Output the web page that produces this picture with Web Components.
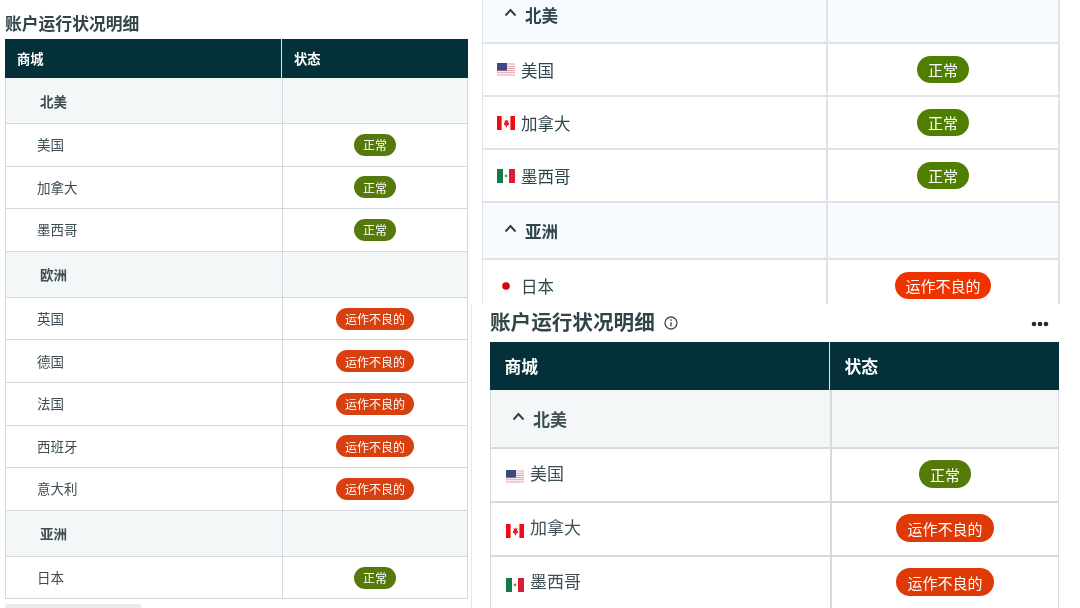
<!DOCTYPE html>
<html lang="zh">
<head>
<meta charset="utf-8">
<title>账户运行状况明细</title>
<style>
  html, body {
    margin: 0;
    height: 608px;
    overflow: hidden;
    background: #fff;
  }
  body {
    position: relative;
    font-family: "Noto Sans CJK SC", "Noto Sans", sans-serif;
  }
</style>
</head>
<body>

<!-- left screenshot -->
<health-panel style="left:0;top:0;width:470px;height:608px;--pad-left:5px;--pad-right:2px;--title-h:32px;--title-top:7px;--title-fs:16.8px;--col1:276px;--head-h:39px;--head-fs:13.3px;--head-px:12px;--group-h:46px;--group-fs:13.5px;--group-px:34px;--row-h:42.6px;--fs:13.5px;--row-px:31px;--name-lift:1px;--pill-h:22px;--pill-fs:12px;--pill-px:9px;--green:#55790b;--red:#d9400f;--group-bg:#f3f7f8;--ink:#3d4d53;--line:#d3d9dd">
  <span slot="title">账户运行状况明细</span>
  <health-table>
    <span slot="market">商城</span>
    <span slot="status">状态</span>
    <region-row>北美</region-row>
    <market-row>美国<status-pill slot="status" kind="ok">正常</status-pill></market-row>
    <market-row>加拿大<status-pill slot="status" kind="ok">正常</status-pill></market-row>
    <market-row>墨西哥<status-pill slot="status" kind="ok">正常</status-pill></market-row>
    <region-row>欧洲</region-row>
    <market-row>英国<status-pill slot="status" kind="bad">运作不良的</status-pill></market-row>
    <market-row>德国<status-pill slot="status" kind="bad">运作不良的</status-pill></market-row>
    <market-row>法国<status-pill slot="status" kind="bad">运作不良的</status-pill></market-row>
    <market-row>西班牙<status-pill slot="status" kind="bad">运作不良的</status-pill></market-row>
    <market-row>意大利<status-pill slot="status" kind="bad">运作不良的</status-pill></market-row>
    <region-row>亚洲</region-row>
    <market-row>日本<status-pill slot="status" kind="ok">正常</status-pill></market-row>
  </health-table>
  <scroll-thumb></scroll-thumb>
</health-panel>

<!-- top right screenshot, scrolled so the header is out of view -->
<health-panel style="left:470px;top:0;width:610px;height:304px;--pad-left:12px;--pad-right:20px;--title-h:0px;--table-top:-13px;--col1:343px;--group-h:57px;--group-fs:16.5px;--group-px:21px;--row-h:53px;--fs:16.5px;--row-px:14px;--pill-h:27px;--pill-fs:15px;--pill-px:10.5px;--green:#4f7f00;--red:#ee3300;--group-bg:#f7faff;--ink:#2f454c;--line:#dfe3e8;--line-w:2px;--side-w:2px">
  <health-table nohead>
    <region-row><chevron-icon></chevron-icon>北美</region-row>
    <market-row><flag-icon kind="us"></flag-icon>美国<status-pill slot="status" kind="ok">正常</status-pill></market-row>
    <market-row><flag-icon kind="ca"></flag-icon>加拿大<status-pill slot="status" kind="ok">正常</status-pill></market-row>
    <market-row><flag-icon kind="mx"></flag-icon>墨西哥<status-pill slot="status" kind="ok">正常</status-pill></market-row>
    <region-row><chevron-icon></chevron-icon>亚洲</region-row>
    <market-row><flag-icon kind="jp"></flag-icon>日本<status-pill slot="status" kind="bad">运作不良的</status-pill></market-row>
  </health-table>
</health-panel>

<!-- bottom right screenshot -->
<health-panel edge style="left:471px;top:304px;width:609px;height:304px;--pad-left:19px;--pad-right:21px;--title-h:34px;--title-top:0px;--title-gap:4px;--title-fs:20.6px;--col1:339px;--head-h:48px;--head-fs:16.8px;--head-px:14.5px;--group-h:59px;--group-fs:17px;--group-px:21px;--row-h:54px;--fs:17px;--row-px:15px;--name-lift:5px;--flag-drop:8px;--pill-lift:2px;--pill-h:28px;--pill-fs:15px;--pill-px:11px;--green:#567a0a;--red:#dd3a08;--group-bg:#f4f7f8;--ink:#3c4f55;--line:#d5dadd;--line-w:2px">
  <span slot="title">账户运行状况明细</span>
  <info-icon slot="title-icon"></info-icon>
  <more-dots slot="actions"></more-dots>
  <health-table>
    <span slot="market">商城</span>
    <span slot="status">状态</span>
    <region-row><chevron-icon></chevron-icon>北美</region-row>
    <market-row><flag-icon kind="us"></flag-icon>美国<status-pill slot="status" kind="ok">正常</status-pill></market-row>
    <market-row><flag-icon kind="ca"></flag-icon>加拿大<status-pill slot="status" kind="bad">运作不良的</status-pill></market-row>
    <market-row><flag-icon kind="mx"></flag-icon>墨西哥<status-pill slot="status" kind="bad">运作不良的</status-pill></market-row>
  </health-table>
</health-panel>

<script>
// small helper so every element below is set up the same way
function shadow(el, html) {
  el.attachShadow({ mode: 'open' }).innerHTML = html;
}

class HealthPanel extends HTMLElement {
  constructor() {
    super();
    shadow(this, `
      <style>
        :host {
          position: absolute;
          display: flex;
          flex-direction: column;
          box-sizing: border-box;
          padding: 0 var(--pad-right) 0 var(--pad-left);
          background: #fff;
          overflow: hidden;
          filter: blur(.35px);
        }
        :host([edge]) {
          border-left: 1px solid #e4e8ea;
          padding-left: calc(var(--pad-left) - 1px);
        }
        header {
          flex: none;
          display: flex;
          align-items: center;
          gap: 9px;
          height: var(--title-h);
          padding-top: var(--title-top, 0);
          padding-bottom: var(--title-gap, 0);
          color: #334449;
          font-size: var(--title-fs, 16px);
          font-weight: 700;
          white-space: nowrap;
        }
        .actions { margin-left: auto; padding-right: 10px; display: flex; }
      </style>
      <header>
        <slot name="title"></slot>
        <slot name="title-icon"></slot>
        <div class="actions"><slot name="actions"></slot></div>
      </header>
      <slot></slot>
    `);
  }
}

class HealthTable extends HTMLElement {
  constructor() {
    super();
    shadow(this, `
      <style>
        :host {
          display: block;
          flex: none;
          margin-top: var(--table-top, 0);
        }
        .head {
          display: grid;
          grid-template-columns: var(--col1) 1fr;
          height: var(--head-h);
          background: #04303a;
          color: #fff;
          font-size: var(--head-fs);
          font-weight: 700;
        }
        .head div {
          display: flex;
          align-items: center;
          padding-left: var(--head-px);
        }
        .head div + div { border-left: 1px solid #dfe6e8; }
        :host([nohead]) .head { display: none; }
      </style>
      <div class="head">
        <div><slot name="market"></slot></div>
        <div><slot name="status"></slot></div>
      </div>
      <slot></slot>
    `);
  }
}

// both row types share this box: two columns, ruled lines, fixed height
const rowCss = `
  :host {
    display: grid;
    grid-template-columns: var(--col1) 1fr;
    box-sizing: border-box;
    border: solid var(--line);
    border-width: 0 var(--side-w, 1px) var(--line-w, 1px) 1px;
    color: var(--ink);
  }
  .status {
    display: flex;
    align-items: center;
    justify-content: center;
    border-left: var(--line-w, 1px) solid var(--line);
  }
  .name {
    display: flex;
    align-items: center;
    white-space: nowrap;
  }
`;

class RegionRow extends HTMLElement {
  constructor() {
    super();
    shadow(this, `
      <style>
        ${rowCss}
        :host {
          height: var(--group-h);
          background: var(--group-bg);
          font-size: var(--group-fs);
          font-weight: 700;
        }
        .name { padding-left: var(--group-px); }
      </style>
      <div class="name"><slot></slot></div>
      <div class="status"></div>
    `);
  }
}

class MarketRow extends HTMLElement {
  constructor() {
    super();
    shadow(this, `
      <style>
        ${rowCss}
        :host {
          height: var(--row-h);
          font-size: var(--fs);
        }
        .name {
          padding-left: var(--row-px);
          padding-bottom: var(--name-lift, 0);
        }
        .status { padding-bottom: var(--pill-lift, 0); }
      </style>
      <div class="name"><slot></slot></div>
      <div class="status"><slot name="status"></slot></div>
    `);
  }
}

class StatusPill extends HTMLElement {
  constructor() {
    super();
    shadow(this, `
      <style>
        :host {
          display: inline-flex;
          align-items: center;
          height: var(--pill-h);
          padding: 0 var(--pill-px);
          border-radius: 14px;
          color: #fff;
          font-size: var(--pill-fs);
          font-weight: 400;
          background: var(--green);
        }
        :host([kind="bad"]) { background: var(--red); }
      </style>
      <slot></slot>
    `);
  }
}

const FLAGS = {
  us: `<rect width="18" height="14" fill="#fff"/>
       <path d="M0 1h18M0 3.2h18M0 5.4h18M0 7.6h18M0 9.8h18M0 12h18" stroke="#e8a0a8" stroke-width="1.1"/>
       <rect width="10" height="7.6" fill="#3c4a80"/>`,
  ca: `<rect width="18" height="14" fill="#fff"/>
       <rect width="4.6" height="14" fill="#f00a14"/>
       <rect x="13.4" width="4.6" height="14" fill="#f00a14"/>
       <path d="M9 3l1 1.8 1.4-.5-.4 2.4 1.2-.2-.4 1.4.6.5-2.4 1.6.2 1.2H8.8l.2-1.2-2.4-1.6.6-.5-.4-1.4 1.2.2-.4-2.4 1.4.5z" fill="#e0202c"/>`,
  mx: `<rect width="18" height="14" fill="#fff"/>
       <rect width="6" height="14" fill="#0f7a4a"/>
       <rect x="12" width="6" height="14" fill="#d81e34"/>
       <circle cx="9" cy="7" r="1.4" fill="#8a8a50"/>`,
  jp: `<circle cx="9" cy="7" r="3.8" fill="#d90012"/>`
};

class FlagIcon extends HTMLElement {
  constructor() {
    super();
    const kind = this.getAttribute('kind');
    shadow(this, `
      <style>
        :host {
          display: inline-flex;
          flex: none;
          margin-right: 6px;
          margin-top: var(--flag-drop, 0);
        }
      </style>
      <svg width="18" height="14" viewBox="0 0 18 14">${FLAGS[kind]}</svg>
    `);
  }
}

class ChevronIcon extends HTMLElement {
  constructor() {
    super();
    shadow(this, `
      <style>
        :host { display: inline-flex; flex: none; margin: -4px 8px 0 0; }
      </style>
      <svg width="13" height="9" viewBox="0 0 13 9">
        <path d="M1.5 7.5 6.5 2l5 5.5" fill="none" stroke="#2f454c" stroke-width="2"/>
      </svg>
    `);
  }
}

class InfoIcon extends HTMLElement {
  constructor() {
    super();
    shadow(this, `
      <style>
        :host { display: inline-flex; margin-top: 4px; }
      </style>
      <svg width="14" height="14" viewBox="0 0 14 14">
        <circle cx="7" cy="7" r="6" fill="none" stroke="#3c4f55" stroke-width="1.3"/>
        <path d="M7 6.2v4" stroke="#3c4f55" stroke-width="1.4"/>
        <circle cx="7" cy="4.1" r=".9" fill="#3c4f55"/>
      </svg>
    `);
  }
}

class MoreDots extends HTMLElement {
  constructor() {
    super();
    shadow(this, `
      <style>
        :host { display: inline-flex; margin-top: 6px; }
      </style>
      <svg width="18" height="6" viewBox="0 0 18 6">
        <circle cx="3" cy="3" r="2.3" fill="#1f2c30"/>
        <circle cx="9" cy="3" r="2.3" fill="#1f2c30"/>
        <circle cx="15" cy="3" r="2.3" fill="#1f2c30"/>
      </svg>
    `);
  }
}

class ScrollThumb extends HTMLElement {
  constructor() {
    super();
    shadow(this, `
      <style>
        :host {
          display: block;
          flex: none;
          width: 136px;
          height: 5px;
          margin-top: 5px;
          border-radius: 3px;
          background: #e6ecee;
        }
      </style>
    `);
  }
}

customElements.define('health-panel', HealthPanel);
customElements.define('health-table', HealthTable);
customElements.define('region-row', RegionRow);
customElements.define('market-row', MarketRow);
customElements.define('status-pill', StatusPill);
customElements.define('flag-icon', FlagIcon);
customElements.define('chevron-icon', ChevronIcon);
customElements.define('info-icon', InfoIcon);
customElements.define('more-dots', MoreDots);
customElements.define('scroll-thumb', ScrollThumb);
</script>
</body>
</html>
